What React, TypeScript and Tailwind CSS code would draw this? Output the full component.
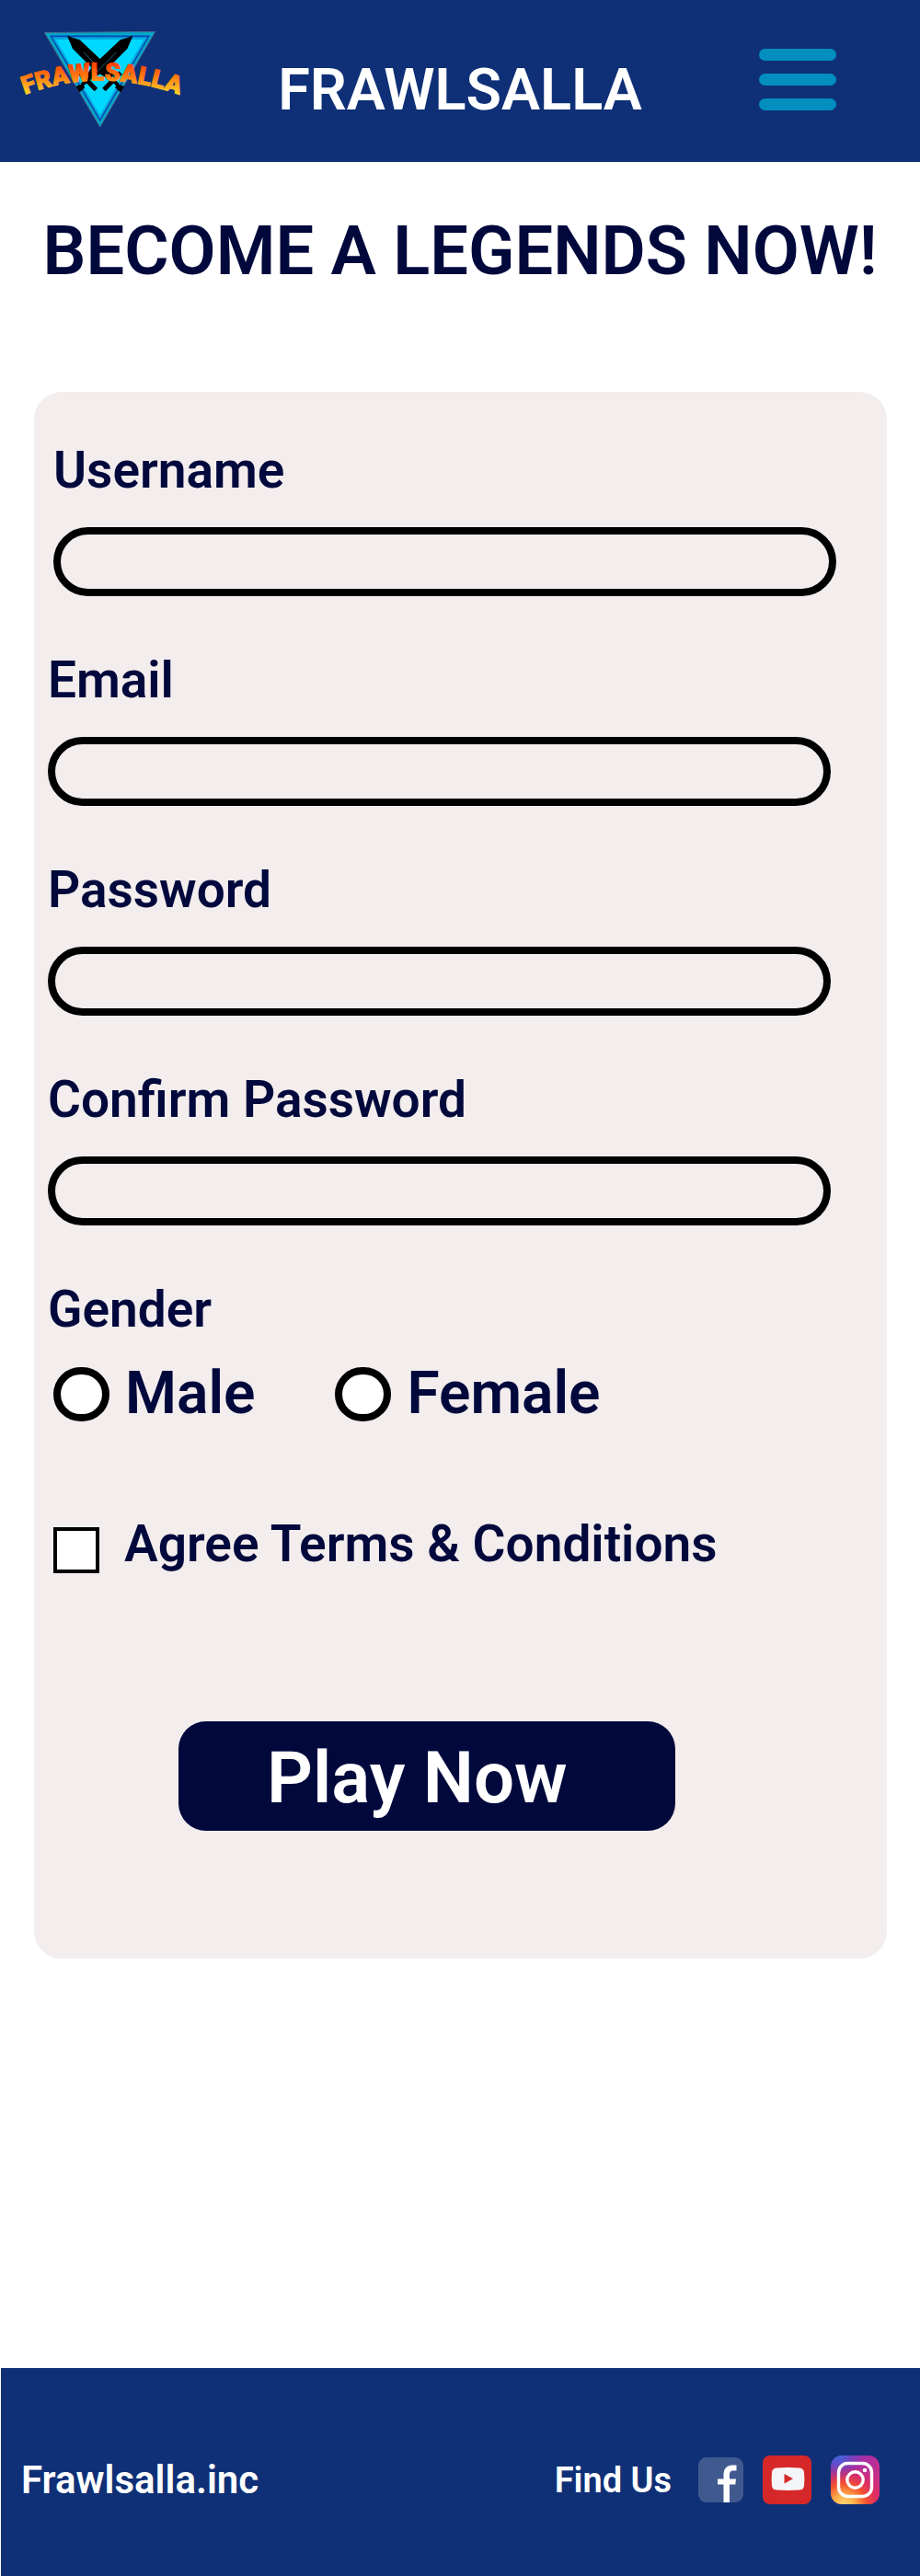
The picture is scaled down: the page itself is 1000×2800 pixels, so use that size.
import { useId } from 'react';

const labelText = 'text-[55px] leading-16 font-semibold text-[#00083c]';

function Logo() {
  return (
    <svg viewBox="26 34 168 108" className="h-[108px] w-[168px] overflow-visible" role="img" aria-label="Frawlsalla logo">
      <defs>
        <linearGradient id="fire" gradientUnits="userSpaceOnUse" x1="0" y1="66" x2="0" y2="100">
          <stop offset="0" stopColor="#ff3300" />
          <stop offset="0.5" stopColor="#ff7a10" />
          <stop offset="1" stopColor="#ffcc28" />
        </linearGradient>
        <path id="arc" d="M27 103 Q108 72 195 103" />
      </defs>
      <path d="M48.500 35.500 L168.500 34.500 L108.700 138 Z" fill="#00a8c8" stroke="#4b6a90" strokeWidth="1" />
      <path d="M55.500 39.500 L161.500 39.500 L108.700 130.500 Z" fill="#00d9ff" stroke="#0648b4" strokeWidth="1.800" />
      <path d="M59 42 L158 42 L108.700 127 Z" fill="none" stroke="#08a9dd" strokeWidth="2" />
      <g id="sword">
        <path d="M73 39 L87 43.500 L116 71 L124 82 L118 86 L103 77 L79 53 Z" fill="#000" />
        <path d="M91 57 L112 78" stroke="#1b6474" strokeWidth="1" />
        <path d="M113 97.500 L131 79" stroke="#000" strokeWidth="5" />
        <path d="M119 84 L128 92" stroke="#000" strokeWidth="4" />
        <path d="M128 91 L135 94 L131 100.500 L125 95 Z" fill="#000" />
      </g>
      <use href="#sword" transform="matrix(-1 0 0 1 217.400 0)" />
      <text
        fontFamily="Roboto, sans-serif"
        fontWeight="900"
        fontSize="27"
        fill="url(#fire)"
        stroke="url(#fire)"
        strokeWidth="1"
        textAnchor="middle"
      >
        <textPath href="#arc" startOffset="50%">FRAWLSALLA</textPath>
      </text>
    </svg>
  );
}

function Field({ label, type = 'text', indent = false }: { label: string; type?: string; indent?: boolean }) {
  const id = useId();
  return (
    <div className={indent ? 'flex flex-col gap-[30px] pr-[55px] pl-[21px]' : 'flex flex-col gap-[30px] pr-[61px] pl-[15px]'}>
      <label htmlFor={id} className={labelText}>{label}</label>
      <input
        id={id}
        type={type}
        className="h-[75px] w-full rounded-full border-8 border-black bg-transparent px-6 text-3xl text-[#00083c] outline-none"
      />
    </div>
  );
}

function Radio({ label }: { label: string }) {
  return (
    <label className="flex items-center gap-[17px] text-[64px] leading-[76px] font-semibold text-[#00083c]">
      <input
        type="radio"
        name="gender"
        className="h-[59px] w-[61px] shrink-0 appearance-none rounded-full border-8 border-black bg-white checked:bg-[#008fbf]"
      />
      {label}
    </label>
  );
}

function FacebookIcon() {
  return (
    <svg viewBox="0 0 49 49" className="size-[49px]" aria-hidden="true">
      <rect width="49" height="49" rx="9" fill="#40598f" />
      <path
        d="M27.500 49 V29.500 H21 V23.500 H27.500 V19 C27.500 12 31.500 8.500 37 8.500 H41.500 V14.500 H38 C35 14.500 34 16 34 19 V23.500 H41 L40.300 29.500 H34 V49 Z"
        fill="#fff"
      />
    </svg>
  );
}

function YoutubeIcon() {
  return (
    <svg viewBox="0 0 53 53" className="size-[53px]" aria-hidden="true">
      <rect width="53" height="53" rx="8" fill="#d62828" />
      <path
        d="M15 13.500 Q27.500 12.500 40 13.500 Q44.500 14 45 18 Q45.700 25.500 45 33 Q44.500 37 40 37.500 Q27.500 38.300 15 37.500 Q10.500 37 10 33 Q9.300 25.500 10 18 Q10.500 14 15 13.500 Z"
        fill="#f4f5f8"
      />
      <path d="M23.500 20 L33 25.200 L23.500 30.500 Z" fill="#d62828" />
    </svg>
  );
}

function InstagramIcon() {
  return (
    <svg viewBox="0 0 53 53" className="size-[53px]" aria-hidden="true">
      <defs>
        <linearGradient id="igBase" x1="0" y1="0" x2="1" y2="0.800">
          <stop offset="0" stopColor="#5b3fc4" />
          <stop offset="0.450" stopColor="#a82fa6" />
          <stop offset="1" stopColor="#e02d72" />
        </linearGradient>
        <radialGradient id="igWarm" cx="0.270" cy="1.050" r="0.950">
          <stop offset="0" stopColor="#ffe07a" />
          <stop offset="0.250" stopColor="#fdb04a" />
          <stop offset="0.500" stopColor="#f4502f" />
          <stop offset="0.750" stopColor="#e02a60" stopOpacity="0.700" />
          <stop offset="1" stopColor="#c02a90" stopOpacity="0" />
        </radialGradient>
        <radialGradient id="igCool" cx="0.150" cy="0" r="0.500">
          <stop offset="0" stopColor="#3f6be0" />
          <stop offset="1" stopColor="#6a3fc8" stopOpacity="0" />
        </radialGradient>
      </defs>
      <rect width="53" height="53" rx="12" fill="url(#igBase)" />
      <rect width="53" height="53" rx="12" fill="url(#igWarm)" />
      <rect width="53" height="53" rx="12" fill="url(#igCool)" />
      <rect x="8.500" y="8.500" width="36" height="36" rx="10" fill="none" stroke="#fff" strokeWidth="3.400" />
      <circle cx="26.500" cy="26.500" r="8.700" fill="none" stroke="#fff" strokeWidth="3.400" />
      <circle cx="37" cy="16" r="2.300" fill="#fff" />
    </svg>
  );
}

export default function App() {
  return (
    <div className="flex min-h-screen flex-col bg-white font-[Roboto,sans-serif]">
      <header className="grid grid-cols-[1fr_auto_1fr] items-center bg-[#0f3077] py-[34px]">
        <a href="#" className="ml-[26px] justify-self-start">
          <Logo />
        </a>
        <p className="mt-5 text-[63px] leading-[74px] font-semibold text-white">FRAWLSALLA</p>
        <button type="button" aria-label="Menu" className="mr-[91px] mb-1 flex w-[84px] flex-col gap-3.5 justify-self-end">
          <span className="h-[13px] rounded-full bg-[#008fbf]" />
          <span className="h-[13px] rounded-full bg-[#008fbf]" />
          <span className="h-[13px] rounded-full bg-[#008fbf]" />
        </button>
      </header>

      <main className="flex-1 pb-[445px]">
        <h1 className="pt-[53px] text-center text-[74px] leading-[88px] font-semibold text-[#00083c]">
          BECOME A LEGENDS NOW!
        </h1>

        <form
          className="mt-[109px] mr-9 ml-[37px] rounded-[30px] bg-[#f3eded] pt-[53px] pb-[139px]"
          onSubmit={(e) => e.preventDefault()}
        >
          <div className="flex flex-col gap-[59px]">
            <Field label="Username" indent />
            <Field label="Email" type="email" />
            <Field label="Password" type="password" />
            <Field label="Confirm Password" type="password" />
          </div>

          <fieldset className="mt-[59px]">
            <legend className={`ml-[15px] ${labelText}`}>Gender</legend>
            <div className="mt-[22px] flex gap-[87px] pl-[21px]">
              <Radio label="Male" />
              <Radio label="Female" />
            </div>
          </fieldset>

          <label className={`mt-[93px] flex items-end gap-[27px] pl-[21px] ${labelText}`}>
            <input
              type="checkbox"
              className="size-[50px] shrink-0 appearance-none border-4 border-black bg-white checked:bg-[#008fbf]"
            />
            Agree Terms &amp; Conditions
          </label>

          <button
            type="submit"
            className="mt-[161px] ml-[157px] block w-[540px] rounded-[30px] bg-[#00083c] pt-4 pb-[11px] pl-[96px] text-left text-[78px] leading-[92px] font-semibold text-white"
          >
            Play Now
          </button>
        </form>
      </main>

      <footer className="ml-px flex items-center justify-between bg-[#0f3077] pt-[95px] pr-11 pb-[78px] pl-[22px] font-semibold text-white">
        <p className="text-[42px] leading-[50px]">Frawlsalla.inc</p>
        <div className="flex items-center gap-[21px]">
          <p className="mr-2 text-[38px] leading-11">Find Us</p>
          <a href="#" aria-label="Facebook"><FacebookIcon /></a>
          <a href="#" aria-label="YouTube"><YoutubeIcon /></a>
          <a href="#" aria-label="Instagram"><InstagramIcon /></a>
        </div>
      </footer>
    </div>
  );
}
